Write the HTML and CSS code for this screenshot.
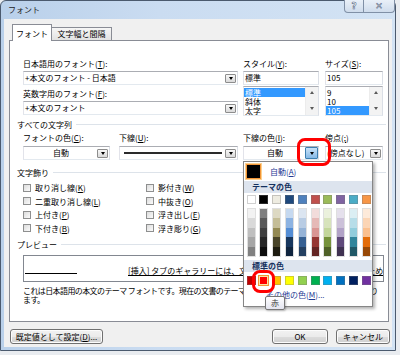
FILE: index.html
```html
<!DOCTYPE html>
<html lang="ja">
<head>
<meta charset="utf-8">
<title>フォント</title>
<link rel="stylesheet" href="styles.css">
</head>
<body>
<div class="window">
  <div class="titlebar">
    <span class="title">フォント</span>
    <div class="caption">
      <span class="cap-btn cap-help">?</span>
      <span class="cap-btn cap-close">✕</span>
    </div>
  </div>
  <div class="client">
    <div class="tabs">
      <div class="tab tab-active">フォント</div>
      <div class="tab">文字幅と間隔</div>
    </div>
    <div class="panel">
      <div class="font-row">
        <div class="col-font">
          <div class="lbl">日本語用のフォント(<u>T</u>):</div>
          <div class="combo combo-top"><span class="combo-text">+本文のフォント - 日本語</span><span class="dd"><i class="tri"></i></span></div>
          <div class="lbl lbl-second">英数字用のフォント(<u>F</u>):</div>
          <div class="combo combo-top"><span class="combo-text">+本文のフォント</span><span class="dd"><i class="tri"></i></span></div>
        </div>
        <div class="col-style">
          <div class="lbl">スタイル(<u>Y</u>):</div>
          <div class="textbox">標準</div>
          <div class="listbox">
            <div class="items">
              <div class="item sel">標準</div>
              <div class="item">斜体</div>
              <div class="item">太字</div>
            </div>
            <div class="vscroll"><i class="arr-up"></i><i class="arr-down"></i></div>
          </div>
        </div>
        <div class="col-size">
          <div class="lbl">サイズ(<u>S</u>):</div>
          <div class="textbox">105</div>
          <div class="listbox">
            <div class="items">
              <div class="item">9</div>
              <div class="item">10</div>
              <div class="item sel">105</div>
            </div>
            <div class="vscroll"><i class="arr-up"></i><i class="arr-down"></i></div>
          </div>
        </div>
      </div>

      <div class="group group-first"><span>すべての文字列</span></div>
      <div class="attr-row">
        <div class="field f-color">
          <div class="lbl">フォントの色(<u>C</u>):</div>
          <div class="combo"><span class="combo-text centered">自動</span><span class="dd"><i class="tri"></i></span></div>
        </div>
        <div class="field f-underline">
          <div class="lbl">下線(<u>U</u>):</div>
          <div class="combo"><span class="combo-text"><span class="uline-sample"></span></span><span class="dd"><i class="tri"></i></span></div>
        </div>
        <div class="field f-ucolor">
          <div class="lbl">下線の色(<u>I</u>):</div>
          <div class="combo anchor">
            <span class="combo-text centered">自動</span><span class="dd dd-hot"><i class="tri"></i></span>
            <div class="mark mark-button"></div>
            <div class="popup">
              <div class="auto-row"><span class="auto-swatch"></span><span class="auto-text">自動(<u>A</u>)</span></div>
              <div class="pop-head">テーマの色</div>
              <div class="swatch-row theme-top">
                <span class="sw" style="background:#ffffff"></span>
                <span class="sw" style="background:#000000"></span>
                <span class="sw" style="background:#eeece1"></span>
                <span class="sw" style="background:#1f497d"></span>
                <span class="sw" style="background:#4f81bd"></span>
                <span class="sw" style="background:#c0504d"></span>
                <span class="sw" style="background:#9bbb59"></span>
                <span class="sw" style="background:#8064a2"></span>
                <span class="sw" style="background:#4bacc6"></span>
                <span class="sw" style="background:#f79646"></span>
              </div>
              <div class="swatch-row shades">
                <span class="shade-col"><i style="background:#f2f2f2"></i><i style="background:#d9d9d9"></i><i style="background:#bfbfbf"></i><i style="background:#a6a6a6"></i><i style="background:#808080"></i></span>
                <span class="shade-col"><i style="background:#7f7f7f"></i><i style="background:#595959"></i><i style="background:#3f3f3f"></i><i style="background:#262626"></i><i style="background:#0c0c0c"></i></span>
                <span class="shade-col"><i style="background:#ddd9c3"></i><i style="background:#c4bd97"></i><i style="background:#938953"></i><i style="background:#494429"></i><i style="background:#1d1b10"></i></span>
                <span class="shade-col"><i style="background:#c6d9f0"></i><i style="background:#8db3e2"></i><i style="background:#548dd4"></i><i style="background:#17365d"></i><i style="background:#0f243e"></i></span>
                <span class="shade-col"><i style="background:#dbe5f1"></i><i style="background:#b8cce4"></i><i style="background:#95b3d7"></i><i style="background:#366092"></i><i style="background:#244061"></i></span>
                <span class="shade-col"><i style="background:#f2dcdb"></i><i style="background:#e5b9b7"></i><i style="background:#d99694"></i><i style="background:#953734"></i><i style="background:#632423"></i></span>
                <span class="shade-col"><i style="background:#ebf1dd"></i><i style="background:#d7e3bc"></i><i style="background:#c3d69b"></i><i style="background:#76923c"></i><i style="background:#4f6128"></i></span>
                <span class="shade-col"><i style="background:#e5e0ec"></i><i style="background:#ccc1d9"></i><i style="background:#b2a2c7"></i><i style="background:#5f497a"></i><i style="background:#3f3151"></i></span>
                <span class="shade-col"><i style="background:#dbeef3"></i><i style="background:#b7dde8"></i><i style="background:#92cddc"></i><i style="background:#31859b"></i><i style="background:#205867"></i></span>
                <span class="shade-col"><i style="background:#fdeada"></i><i style="background:#fbd5b5"></i><i style="background:#fac08f"></i><i style="background:#e36c09"></i><i style="background:#974806"></i></span>
              </div>
              <div class="pop-head pop-head-std">標準の色</div>
              <div class="swatch-row std">
                <span class="sw" style="background:#c00000"></span>
                <span class="sw sw-hot" style="background:#ff0000"></span>
                <span class="sw" style="background:#ffc000"></span>
                <span class="sw" style="background:#ffff00"></span>
                <span class="sw" style="background:#92d050"></span>
                <span class="sw" style="background:#00b050"></span>
                <span class="sw" style="background:#00b0f0"></span>
                <span class="sw" style="background:#0070c0"></span>
                <span class="sw" style="background:#002060"></span>
                <span class="sw" style="background:#7030a0"></span>
              </div>
              <div class="more-row">その他の色(<u>M</u>)...</div>
              <div class="mark mark-swatch"></div>
              <div class="tooltip">赤</div>
            </div>
          </div>
        </div>
        <div class="field f-emph">
          <div class="lbl">傍点(<u>;</u>)</div>
          <div class="combo"><span class="combo-text">(傍点なし)</span><span class="dd"><i class="tri"></i></span></div>
        </div>
      </div>

      <div class="group group-deco"><span>文字飾り</span></div>
      <div class="checks">
        <div class="chk"><span class="box"></span>取り消し線(<u>K</u>)</div>
        <div class="chk"><span class="box"></span>影付き(<u>W</u>)</div>
        <div class="chk"><span class="box"></span>二重取り消し線(<u>L</u>)</div>
        <div class="chk"><span class="box"></span>中抜き(<u>O</u>)</div>
        <div class="chk"><span class="box"></span>上付き(<u>P</u>)</div>
        <div class="chk"><span class="box"></span>浮き出し(<u>E</u>)</div>
        <div class="chk"><span class="box"></span>下付き(<u>B</u>)</div>
        <div class="chk"><span class="box"></span>浮き彫り(<u>G</u>)</div>
      </div>

      <div class="group group-preview"><span>プレビュー</span></div>
      <div class="preview">
        <span class="pv-line"></span>
        <span class="pv-text">[挿入] タブのギャラリーには、文書全体の体裁に合わせて調整するためのアイテムが含まれています。</span>
      </div>
      <div class="desc">これは日本語用の本文のテーマ フォントです。現在の文書のテーマによって、使用されるフォントが決まり<br>ます。</div>
    </div>
    <div class="buttons">
      <button class="btn btn-default">既定値として設定(<u>D</u>)...</button>
      <button class="btn btn-ok">OK</button>
      <button class="btn btn-cancel">キャンセル</button>
    </div>
  </div>
</div>
</body>
</html>
```

FILE: styles.css
```css
* { box-sizing: border-box; }
html, body { margin: 0; padding: 0; }
body {
  width: 400px;
  height: 355px;
  overflow: hidden;
  background: #e9ecf0;
  font-family: "Noto Sans CJK JP", "Noto Sans", sans-serif;
  font-size: 8px;
  color: #000;
}
u { text-decoration: underline; text-underline-offset: 1px; }

.window {
  width: 396px;
  height: 351px;
  border: 1px solid #4b5a6e;
  border-radius: 6px 6px 0 0;
  background: linear-gradient(90deg, #b9d0ea 0, #cadcf1 40%, #d3e3f4 100%);
  padding: 0 3px 3px 3px;
  display: flex;
  flex-direction: column;
}

.titlebar {
  height: 18px;
  display: flex;
  align-items: flex-start;
}
.title {
  padding-left: 4px;
  line-height: 17px;
  color: #1c1c1c;
}
.caption {
  margin-left: auto;
  margin-right: -3px;
  margin-top: -1px;
  display: flex;
}
.cap-btn {
  height: 13px;
  border: 1px solid #8090a6;
  border-top: none;
  background: linear-gradient(#e9f0f8, #cfdcec);
  color: #f4f7fb;
  -webkit-text-stroke: 0.5px #56667e;
  font-family: "DejaVu Sans", sans-serif;
  font-weight: bold;
  font-size: 9px;
  line-height: 12px;
  text-align: center;
}
.cap-help { width: 20px; border-radius: 0 0 0 4px; }
.cap-close { width: 31px; border-left: none; border-radius: 0 0 4px 0; }

.client {
  flex: 1;
  background: #f0f0f0;
  padding: 5px 3px 0 5px;
  display: flex;
  flex-direction: column;
}

.tabs {
  height: 16px;
  display: flex;
  align-items: flex-end;
  padding-left: 3px;
}
.tab {
  height: 13px;
  width: 60px;
  border: 1px solid #898c95;
  border-bottom: none;
  border-left: none;
  background: linear-gradient(#f6f6f6, #e2e2e2);
  text-align: center;
  line-height: 12px;
  white-space: nowrap;
}
.tab-active {
  position: relative;
  z-index: 2;
  width: 40px;
  height: 17px;
  margin-bottom: -1px;
  border-left: 1px solid #898c95;
  background: #fff;
  line-height: 17px;
}

.panel {
  position: relative;
  height: 282px;
  border: 1px solid #898c95;
  background: #fff;
  padding: 17px 4px 0 13px;
}

.lbl {
  height: 11px;
  line-height: 11px;
  white-space: nowrap;
}

.font-row { display: flex; gap: 5px; }
.col-font { width: 215px; }
.col-style { width: 76px; }
.col-size { width: 58px; margin-left: 1px; }
.lbl-second { margin-top: 3px; }

.combo {
  height: 14px;
  margin-top: 2px;
  border: 1px solid #abadb3;
  border-color: #abadb3 #dbdfe6 #e3e9ef #e2e3ea;
  background: #fff;
  display: flex;
  align-items: center;
}
.combo-top { margin-top: 2px; }
.combo-text {
  flex: 1;
  min-width: 0;
  padding-left: 1px;
  line-height: 12px;
  white-space: nowrap;
  overflow: hidden;
  display: flex;
  align-items: center;
  height: 12px;
}
.centered { justify-content: center; }
.dd {
  width: 11px;
  height: 9px;
  margin-right: 1px;
  border: 1px solid #8d8d8d;
  border-radius: 1px;
  background: linear-gradient(#f7f7f7, #dadada);
  display: flex;
  align-items: center;
  justify-content: center;
  flex: none;
}
.tri {
  width: 0;
  height: 0;
  border-left: 2.5px solid transparent;
  border-right: 2.5px solid transparent;
  border-top: 3px solid #000;
}
.dd-hot {
  width: 13px;
  height: 12px;
  margin-right: 0;
  border-color: #3c7fb1;
  background: linear-gradient(#c8e2f8, #86b9e6);
}

.textbox {
  height: 14px;
  margin-top: 2px;
  border: 1px solid #abadb3;
  border-color: #abadb3 #dbdfe6 #e3e9ef #e2e3ea;
  padding-left: 1px;
  line-height: 12px;
}
.listbox {
  height: 30px;
  margin-top: 1px;
  border: 1px solid #abadb3;
  border-color: #abadb3 #dbdfe6 #e3e9ef #e2e3ea;
  display: flex;
}
.items { flex: 1; padding-top: 1px; }
.item {
  height: 9px;
  line-height: 9px;
  padding-left: 1px;
  white-space: nowrap;
}
.sel { background: #3399ff; color: #fff; }
.vscroll {
  width: 13px;
  background: #f3f3f3;
  border-left: 1px solid #ececec;
  display: flex;
  flex-direction: column;
  justify-content: space-between;
  align-items: center;
  padding: 4px 0 5px;
}
.arr-up, .arr-down {
  width: 0;
  height: 0;
  border-left: 2px solid transparent;
  border-right: 2px solid transparent;
}
.arr-up { border-bottom: 3px solid #5a5a5a; }
.arr-down { border-top: 3px solid #5a5a5a; }

.group {
  height: 11px;
  line-height: 11px;
  margin-left: -6px;
  margin-right: -2px;
  display: flex;
  align-items: center;
  white-space: nowrap;
}
.group::after {
  content: "";
  flex: 1;
  height: 1px;
  margin-left: 4px;
  background: #dde3ea;
}
.group-first { margin-top: 3px; }
.group-deco { margin-top: 7px; }
.group-preview { margin-top: 4px; }

.attr-row { display: flex; margin-top: 2px; }
.field .combo { margin-top: 3px; }
.f-color { width: 87px; }
.f-underline { width: 119px; margin-left: 9px; }
.f-ucolor { width: 76px; margin-left: 5px; }
.f-emph { width: 58px; margin-left: 6px; }
.uline-sample {
  display: block;
  width: 98px;
  margin-left: 3px;
  height: 2px;
  background: #2b2b2b;
}

.anchor { position: relative; }
.mark {
  position: absolute;
  border: 3px solid #ff0000;
  border-radius: 8px;
  z-index: 30;
}
.mark-button { left: 53px; top: -9px; width: 34px; height: 28px; }

.popup {
  position: absolute;
  left: -1px;
  top: 14px;
  width: 130px;
  height: 146px;
  z-index: 20;
  background: #fff;
  border: 1px solid #868686;
  box-shadow: 2px 2px 3px rgba(0, 0, 0, 0.3);
}
.auto-row {
  height: 19px;
  display: flex;
  align-items: center;
  padding-left: 2px;
}
.auto-swatch {
  width: 15px;
  height: 15px;
  background: #000;
  border: 1px solid #f29536;
  box-shadow: 0 0 0 1px #fcd18f;
}
.auto-text { margin-left: 9px; color: #1f3a93; line-height: 12px; }
.pop-head {
  height: 12px;
  line-height: 12px;
  padding-left: 8px;
  background: #dde4ee;
  color: #15315e;
  font-weight: bold;
}
.pop-head-std { margin-top: 3px; }
.swatch-row {
  display: flex;
  gap: 3.8px;
  padding-left: 2.7px;
}
.theme-top { margin-top: 2px; }
.std { margin-top: 4px; }
.sw {
  width: 9px;
  height: 9px;
  border: 1px solid rgba(120, 120, 120, 0.35);
}
.sw-hot {
  outline: 1px solid #f29536;
  border-color: #fde3a6;
}
.shades { margin-top: 4px; }
.shade-col {
  width: 9px;
  display: flex;
  flex-direction: column;
  border: 1px solid rgba(150, 150, 150, 0.3);
}
.shade-col i { display: block; height: 9.4px; }
.more-row {
  margin-top: 4px;
  padding-left: 22px;
  line-height: 11px;
  color: #1f3a93;
  white-space: nowrap;
}
.mark-swatch { left: 8px; top: 108px; width: 23px; height: 23px; }
.tooltip {
  position: absolute;
  left: 21px;
  top: 134px;
  width: 20px;
  height: 14px;
  z-index: 31;
  border: 1px solid #767676;
  border-radius: 2px;
  background: linear-gradient(#ffffff, #e4e5f0);
  box-shadow: 1px 1px 2px rgba(0, 0, 0, 0.25);
  text-align: center;
  line-height: 12px;
  color: #3b3b3b;
}

.checks {
  margin-top: 3px;
  display: grid;
  grid-template-columns: 123px auto;
  grid-auto-rows: 13.5px;
}
.chk {
  display: flex;
  align-items: center;
  white-space: nowrap;
}
.box {
  width: 8px;
  height: 8px;
  margin-right: 4px;
  border: 1px solid #8e8f8f;
  background: linear-gradient(135deg, #dcdcdc, #fbfbfb);
}

.preview {
  height: 27px;
  margin-top: 5px;
  border: 1px solid #828790;
  background: #fff;
  display: flex;
  align-items: center;
  overflow: hidden;
  padding-left: 1px;
  padding-top: 4px;
}
.pv-line {
  flex: none;
  width: 52px;
  height: 1px;
  margin-top: 5px;
  background: #000;
}
.pv-text {
  flex: none;
  margin-left: 51px;
  white-space: nowrap;
  line-height: 11px;
  text-decoration: underline;
}

.desc {
  margin-top: 4px;
  line-height: 9px;
  white-space: nowrap;
  letter-spacing: -0.6px;
}

.buttons {
  display: flex;
  margin-top: 7px;
  margin-right: -1px;
}
.btn {
  height: 15px;
  padding: 0;
  font-family: inherit;
  font-size: 8px;
  color: #000;
  border: 1px solid #707070;
  border-radius: 3px;
  background: linear-gradient(#f2f2f2 0, #ebebeb 50%, #dddddd 51%, #cfcfcf 100%);
  box-shadow: inset 0 0 0 1px #fcfcfc;
  line-height: 13px;
}
.btn-default { width: 93px; margin-left: 1px; }
.btn-ok { width: 56px; margin-left: auto; }
.btn-cancel { width: 54px; margin-left: 8px; }
```
